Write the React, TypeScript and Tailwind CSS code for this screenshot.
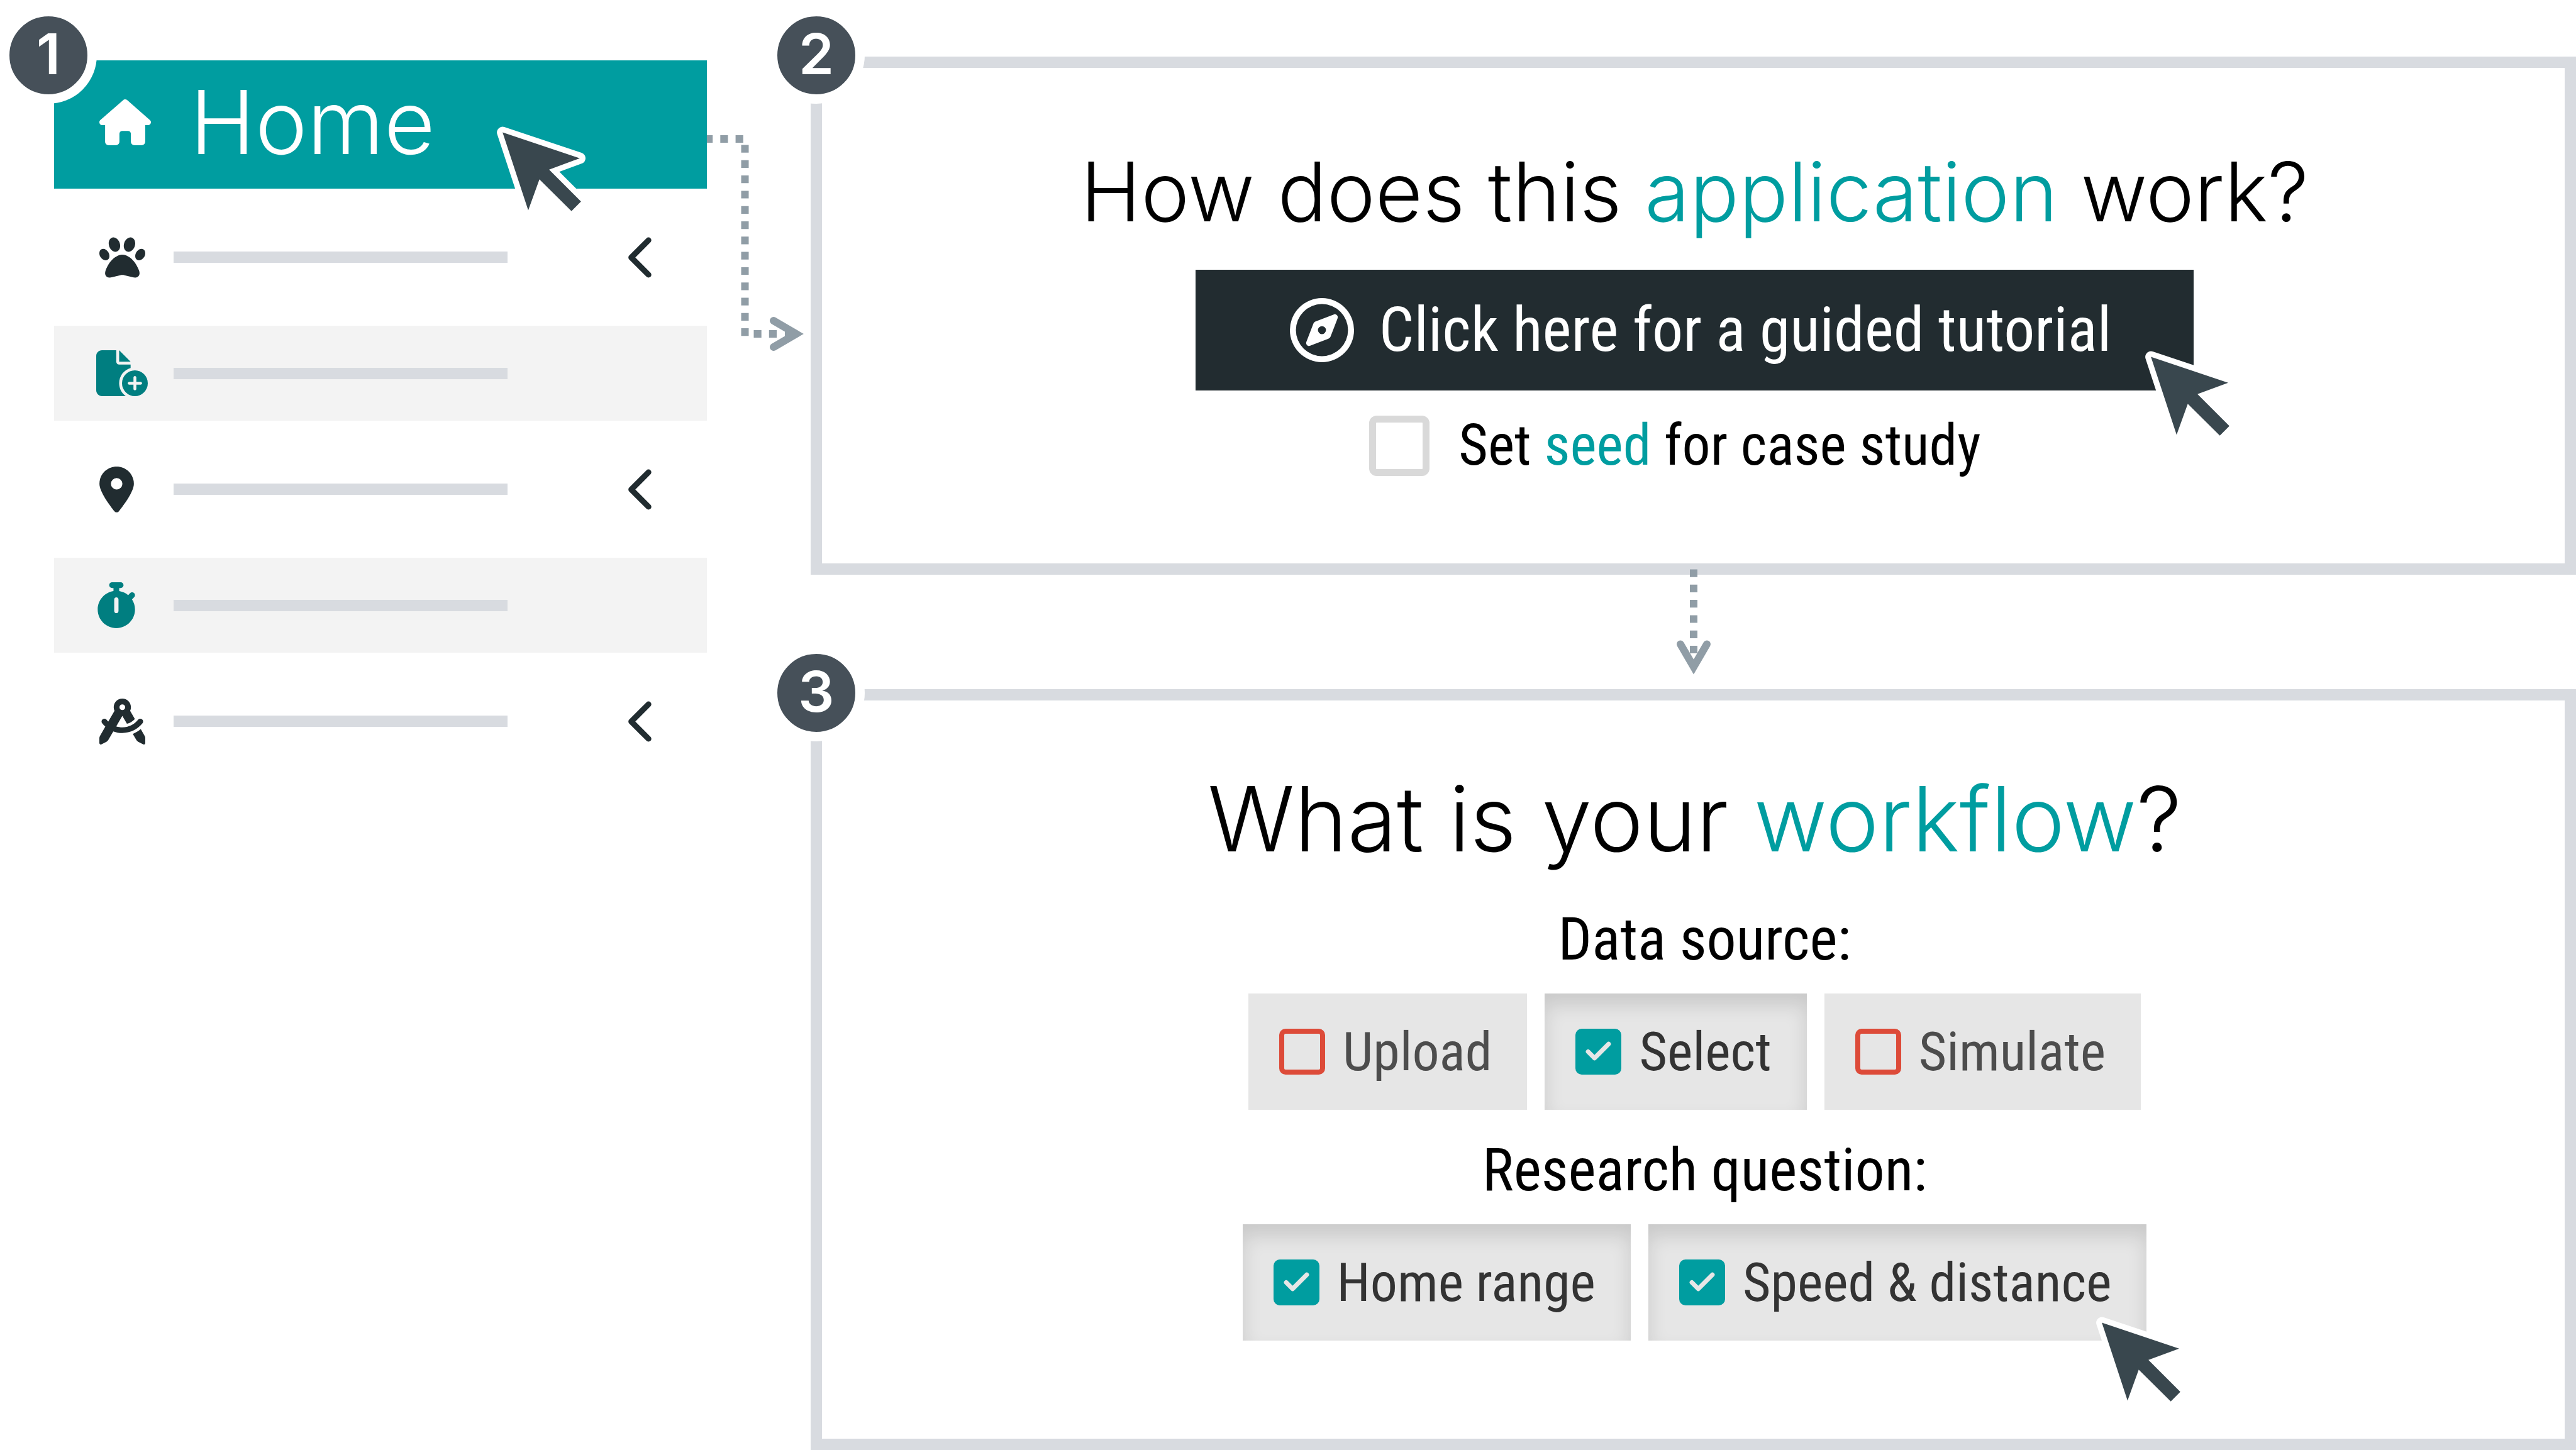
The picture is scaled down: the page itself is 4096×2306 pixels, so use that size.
import type { ReactNode } from "react";
import { Check } from "lucide-react";
import {
  FaChevronLeft,
  FaCompassDrafting,
  FaFileCirclePlus,
  FaHouse,
  FaLocationDot,
  FaPaw,
  FaRegCompass,
  FaStopwatch,
} from "react-icons/fa6";

const condensed =
  "font-['Roboto_Condensed','Liberation_Sans_Narrow','Roboto',sans-serif]";

/** Numbered step marker with a white ring that cuts into what lies below it. */
function StepBadge({ step, className }: { step: number; className: string }) {
  return (
    <div
      className={`absolute flex size-[154px] items-center justify-center rounded-full border-[15px] border-white bg-[#465059] pb-1 font-['Inter',sans-serif] text-[90px] leading-none font-semibold text-white ${className}`}
    >
      {step}
    </div>
  );
}

/** Mouse pointer with a white halo. */
function Pointer({ className }: { className: string }) {
  const points =
    "607,289 1125,462 919,538 1133,752 1069,817 854,604 779,811";
  return (
    <svg
      viewBox="560 240 620 620"
      aria-hidden="true"
      className={`pointer-events-none absolute size-[147px] ${className}`}
    >
      <polygon
        points={points}
        fill="#fff"
        stroke="#fff"
        strokeWidth="76"
        strokeLinejoin="round"
      />
      <polygon points={points} fill="#39474e" />
    </svg>
  );
}

function NavRow({
  label,
  icon,
  tinted = false,
  expandable = false,
  className,
}: {
  label: string;
  icon: ReactNode;
  tinted?: boolean;
  expandable?: boolean;
  className: string;
}) {
  return (
    <li>
      <button
        type="button"
        aria-label={label}
        className={`flex w-full items-center pr-[79px] ${
          tinted
            ? "bg-[#f3f3f3] pl-[67px] text-[#007e80]"
            : "pl-[72px] text-[#212c30]"
        } ${className}`}
      >
        <span className={tinted ? "w-[123px]" : "w-[118px]"}>{icon}</span>
        <span className="h-[18px] w-[531px] bg-[#d8dbe0]" />
        {expandable && <FaChevronLeft className="ml-auto h-[73px] w-[46px]" />}
      </button>
    </li>
  );
}

function Toggle({
  label,
  checked = false,
  children,
}: {
  label: string;
  checked?: boolean;
  children?: ReactNode;
}) {
  return (
    <label
      className={`relative flex items-center gap-7 bg-[#e6e6e6] py-10 pr-14 pl-[49px] text-[86px] leading-[105px] whitespace-nowrap ${
        checked
          ? "text-[#333] shadow-[inset_0_18px_30px_rgba(0,0,0,0.125)]"
          : "text-[#4d4d4d]"
      }`}
    >
      <span className="grid size-[73px] place-items-center">
        <input
          type="checkbox"
          defaultChecked={checked}
          className="col-start-1 row-start-1 size-full appearance-none rounded-[10px] border-8 border-[#dd4b39] checked:border-[#009da0] checked:bg-[#009da0]"
        />
        {checked && (
          <Check
            size={49}
            strokeWidth={3.5}
            className="pointer-events-none col-start-1 row-start-1 text-[#e6e6e6]"
          />
        )}
      </span>
      {label}
      {children}
    </label>
  );
}

/** Dotted elbow arrow from the Home item to the second step. */
function ElbowArrow() {
  return (
    <svg
      viewBox="0 0 165 350"
      aria-hidden="true"
      className="mt-[211px] h-[350px] w-[165px] shrink-0"
      fill="none"
      stroke="#909da6"
      strokeWidth="12"
    >
      <path d="M-3 10H60" strokeDasharray="12.2 12.1" />
      <path d="M60.5 19.5V326" strokeDasharray="12.2 12.1" />
      <path d="M74.5 320H112" strokeDasharray="12.2 12.1" />
      <path d="M106 299L142 320L106 341" strokeLinecap="round" />
      <path d="M124 320H140" />
    </svg>
  );
}

function DownArrow() {
  return (
    <svg
      viewBox="0 0 60 191"
      aria-hidden="true"
      className="relative mx-auto -mt-[9px] h-[191px] w-[60px]"
      fill="none"
      stroke="#909da6"
      strokeWidth="12"
    >
      <path d="M30 .5V134" strokeDasharray="12.2 12.1" />
      <path d="M9 119.5L30 155.5L51 119.5" strokeLinecap="round" />
    </svg>
  );
}

export default function App() {
  return (
    <div className="flex min-h-screen w-full items-start bg-white font-['Inter',sans-serif] text-black">
      <nav aria-label="Main" className="relative mt-24 ml-[86px] w-[1038px] shrink-0">
        <a
          href="#home"
          className="relative flex items-center gap-[62px] bg-[#009da0] pt-4 pb-6 pl-[72px] text-white"
        >
          <FaHouse className="h-[73px] w-[82px]" />
          <span className="text-[140px] leading-[164px] font-[350]">Home</span>
          <Pointer className="right-[189px] -bottom-[46px]" />
        </a>
        <StepBadge step={1} className="-top-[85px] -left-[86px]" />
        <ul>
          <NavRow
            label="Species"
            icon={<FaPaw className="h-[73px] w-[73px]" />}
            expandable
            className="h-[218px]"
          />
          <NavRow
            label="Add file"
            icon={<FaFileCirclePlus className="h-[73px] w-[82px]" />}
            tinted
            className="h-[151px]"
          />
          <NavRow
            label="Tracking"
            icon={<FaLocationDot className="h-[73px] w-[55px]" />}
            expandable
            className="h-[218px]"
          />
          <NavRow
            label="Timing"
            icon={<FaStopwatch className="h-[73px] w-[64px]" />}
            tinted
            className="h-[151px]"
          />
          <NavRow
            label="Design"
            icon={<FaCompassDrafting className="h-[73px] w-[73px]" />}
            expandable
            className="h-[218px]"
          />
        </ul>
      </nav>

      <ElbowArrow />

      <main className={`mt-[90px] min-w-0 flex-1 ${condensed}`}>
        <section className="relative flex flex-col items-center border-[18px] border-[#d8dbe0] pt-[117px] pb-[139px] pl-1">
          <StepBadge step={2} className="-top-[97px] -left-[86px]" />
          <h2 className="font-['Inter',sans-serif] text-[130px] leading-[160px] font-[350] whitespace-nowrap">
            How does this <span className="text-[#009da0]">application</span> work?
          </h2>
          <button
            type="button"
            className="relative mt-11 flex items-center justify-center gap-10 bg-[#222c30] py-8 pr-[131px] pl-[150px] text-[98px] leading-[128px] whitespace-nowrap text-white"
          >
            <FaRegCompass className="text-[102px]" />
            Click here for a guided tutorial
            <Pointer className="-right-[68px] -bottom-[82px]" />
          </button>
          <label className="mt-10 mr-[62px] flex items-center gap-[46px] text-[90px] leading-24 whitespace-nowrap">
            <input
              type="checkbox"
              className="size-24 appearance-none rounded-xl border-[11px] border-[#d9d9d9]"
            />
            <span>
              Set <span className="text-[#009da0]">seed</span> for case study
            </span>
          </label>
        </section>

        <DownArrow />

        <section className="relative flex flex-col items-center border-[18px] border-[#d8dbe0] pt-[100px] pb-[156px] pl-1">
          <StepBadge step={3} className="-top-[89px] -left-[86px]" />
          <h2 className="font-['Inter',sans-serif] text-[143px] leading-[176px] font-[350] whitespace-nowrap">
            What is your <span className="text-[#009da0]">workflow</span>?
          </h2>
          <h3 className="mt-12 ml-8 text-[94px] leading-[112px]">Data source:</h3>
          <div className="mt-[30px] flex gap-7">
            <Toggle label="Upload" />
            <Toggle label="Select" checked />
            <Toggle label="Simulate" />
          </div>
          <h3 className="mt-10 ml-8 text-[94px] leading-[112px]">Research question:</h3>
          <div className="mt-[30px] flex gap-7">
            <Toggle label="Home range" checked />
            <Toggle label="Speed &amp; distance" checked>
              <Pointer className="-right-[65px] -bottom-[107px]" />
            </Toggle>
          </div>
        </section>
      </main>
    </div>
  );
}
